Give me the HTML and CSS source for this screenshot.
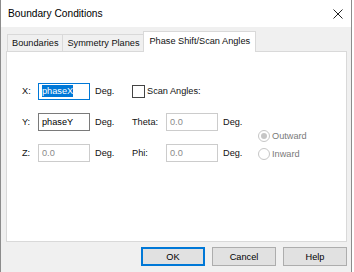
FILE: index.html
```html
<!DOCTYPE html>
<html lang="en">
<head>
  <meta charset="UTF-8">
  <title>Boundary Conditions</title>
  <link rel="stylesheet" href="styles.css">
</head>
<body>
  <div class="dialog">
    <div class="titlebar">
      <span class="title">Boundary Conditions</span>
      <svg class="close" width="10" height="10" viewBox="0 0 10 10">
        <path d="M0.5 0.5 L9.5 9.5 M9.5 0.5 L0.5 9.5" stroke="#222" stroke-width="1" fill="none"/>
      </svg>
    </div>
    <div class="content">
      <div class="tabs">
        <div class="tab">Boundaries</div>
        <div class="tab">Symmetry Planes</div>
        <div class="tab active">Phase Shift/Scan Angles</div>
      </div>
      <div class="panel">
        <div class="grid">
          <span class="lbl">X:</span>
          <div class="field focus"><span class="sel">phaseX</span></div>
          <span class="unit">Deg.</span>
          <div class="check"><span class="box"></span>Scan Angles:</div>

          <span class="lbl">Y:</span>
          <div class="field">phaseY</div>
          <span class="unit">Deg.</span>
          <span class="lbl">Theta:</span>
          <div class="field disabled">0.0</div>
          <span class="unit">Deg.</span>
          <div class="radios">
            <div class="radio"><span class="dot on"></span>Outward</div>
            <div class="radio"><span class="dot"></span>Inward</div>
          </div>

          <span class="lbl">Z:</span>
          <div class="field disabled">0.0</div>
          <span class="unit">Deg.</span>
          <span class="lbl">Phi:</span>
          <div class="field disabled">0.0</div>
          <span class="unit">Deg.</span>
        </div>
      </div>
      <div class="buttons">
        <button class="default">OK</button>
        <button>Cancel</button>
        <button>Help</button>
      </div>
    </div>
  </div>
</body>
</html>
```

FILE: styles.css
```css
body {
  margin: 0;
  background: white;
  font-family: "Liberation Sans", Arial, sans-serif;
  font-size: 9.2px;
  color: #111;
}
.dialog {
  width: 350px;
  height: 272px;
  border-left: 1px solid #8c8c8c;
  border-right: 1px solid #8c8c8c;
  background: #f0f0f0;
}
.titlebar {
  height: 27px;
  background: white;
  display: flex;
  align-items: center;
  justify-content: space-between;
  padding: 0 8px 0 7px;
}
.title {
  font-size: 10.2px;
  color: #000;
}
.content {
  padding: 4px 4px 0 5px;
}
.tabs {
  display: flex;
  align-items: flex-end;
  padding-left: 1px;
  height: 20px;
}
.tab {
  height: 16px;
  line-height: 16px;
  padding: 0 4px;
  border: 1px solid #d9d9d9;
  border-bottom: none;
  margin-right: -1px;
  background: #f0f0f0;
}
.tab.active {
  height: 20px;
  line-height: 18px;
  background: white;
  margin-bottom: -1px;
  padding: 0 5px;
  position: relative;
  z-index: 1;
}
.panel {
  height: 189px;
  width: 339px;
  background: white;
  border: 1px solid #d9d9d9;
}
.grid {
  display: grid;
  grid-template-columns: 16px 52px 42px 34px 52px 40px auto;
  grid-template-rows: 18px 18px 18px;
  row-gap: 13px;
  align-items: center;
  padding: 30px 0 0 15px;
}
.field {
  height: 16px;
  line-height: 16px;
  border: 1px solid #7a7a7a;
  padding-left: 3px;
  background: white;
  color: #000;
}
.field.focus {
  border-color: #0078d7;
  height: 15px;
  line-height: 15px;
}
.field.disabled {
  border-color: #cccccc;
  color: #8a8a8a;
}
.sel {
  background: #0078d7;
  color: white;
  padding: 1px 0;
}
.unit {
  padding-left: 5px;
}
.check {
  grid-column: 4 / 8;
  display: flex;
  align-items: center;
  gap: 2px;
}
.box {
  width: 11px;
  height: 11px;
  border: 1px solid #444;
  background: white;
}
.radios {
  grid-column: 7;
  grid-row: 2 / 4;
  align-self: start;
  margin-top: 16px;
  display: flex;
  flex-direction: column;
  gap: 5px;
  color: #7a7a7a;
}
.radio {
  display: flex;
  align-items: center;
  gap: 2px;
  height: 13px;
}
.dot {
  width: 10px;
  height: 10px;
  border: 1px solid #c6c6c6;
  border-radius: 50%;
  background: white;
  position: relative;
}
.dot.on::after {
  content: "";
  position: absolute;
  left: 2px;
  top: 2px;
  width: 6px;
  height: 6px;
  border-radius: 50%;
  background: #c6c6c6;
}
.buttons {
  display: flex;
  justify-content: flex-end;
  gap: 7px;
  margin-top: 5px;
}
button {
  width: 64px;
  height: 19px;
  padding: 0;
  font-family: "Liberation Sans", Arial, sans-serif;
  font-size: 9.2px;
  color: #000;
  background: #e1e1e1;
  border: 1px solid #adadad;
}
button.default {
  border: 2px solid #0078d7;
}
```
